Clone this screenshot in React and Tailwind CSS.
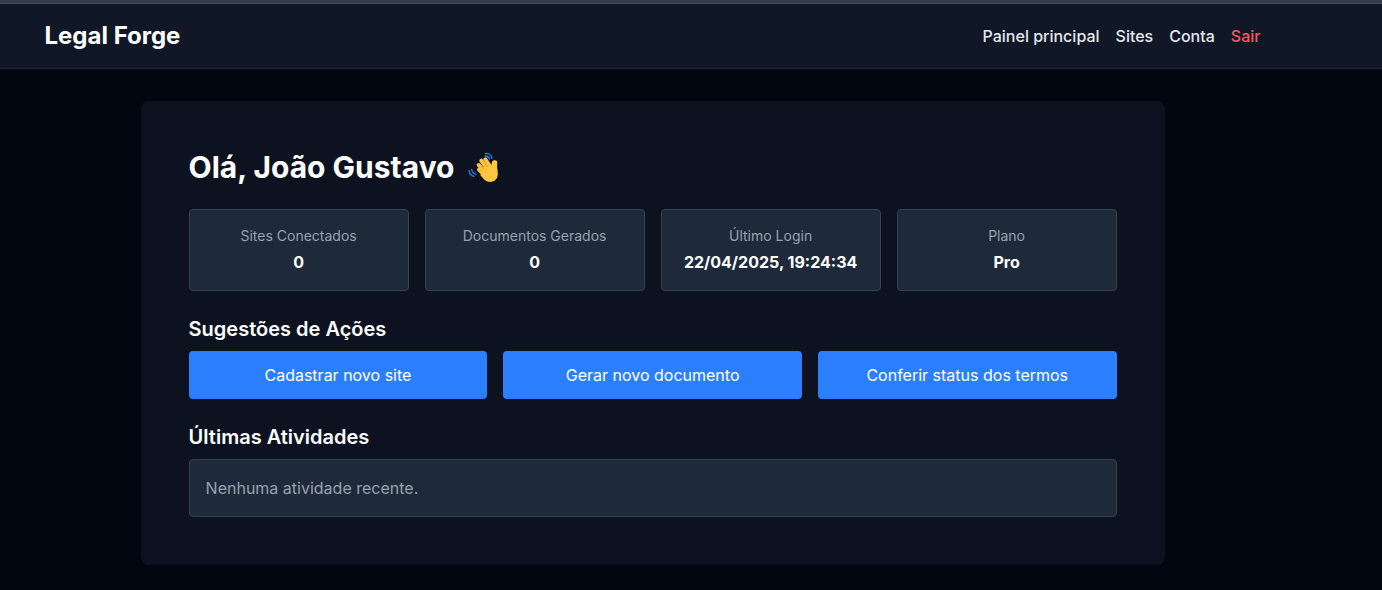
import React from 'react';

const stats = [
  { label: 'Sites Conectados', value: '0' },
  { label: 'Documentos Gerados', value: '0' },
  { label: 'Último Login', value: '22/04/2025, 19:24:34' },
  { label: 'Plano', value: 'Pro' },
];

const actions = ['Cadastrar novo site', 'Gerar novo documento', 'Conferir status dos termos'];

const WavingHand = () => (
  <svg viewBox="36 36 93 93" className="w-[31px] h-[31px] shrink-0" fill="none" strokeLinecap="round" strokeLinejoin="round">
    {/* Motion lines */}
    <g stroke="#2f7be0" strokeWidth="4">
      <path d="M88 41c10-2 18 4 20 14" />
      <path d="M87 48c6 0 11 3 14 9" />
      <path d="M39 91c1 9 6 16 15 18" />
      <path d="M47 88c1 7 6 12 13 15" />
    </g>
    {/* Fingers */}
    <g stroke="#ffc541" strokeWidth="12">
      <path d="M88 58l17 26" />
      <path d="M76 62l21 30" />
      <path d="M68 75l21 24" />
      <path d="M69 89l18 18" />
    </g>
    {/* Palm and thumb */}
    <path
      fill="#ffc541"
      d="M105 80c2-7 1-11 4-16 2-4 11-5 14 0 2 6-1 13 1 22 2 12 3 24-4 32-8 10-24 10-34 2L73 106l10-24z"
    />
    {/* Finger creases */}
    <g stroke="#f0a035" strokeWidth="2.2">
      <path d="M83 65l11 16" />
      <path d="M73 73l11 14" />
      <path d="M71 84l9 10" />
    </g>
  </svg>
);

const Header = () => (
  <header className="bg-[#101828] border-b border-[#1e2939]">
    <div className="h-16 flex items-center justify-between pl-[44.5px] pr-[121.5px]">
      <span className="text-2xl font-bold text-white">Legal Forge</span>
      <nav className="flex gap-4 font-medium text-gray-200">
        <a href="#">Painel principal</a>
        <a href="#">Sites</a>
        <a href="#">Conta</a>
        <a href="#" className="text-[#ff555c]">Sair</a>
      </nav>
    </div>
  </header>
);

const App = () => {
  return (
    <div className="h-[590px] overflow-hidden bg-[#020610] text-white font-['Inter',sans-serif]">
      {/* Top strip */}
      <div className="h-1 bg-[#323d4e] border-b border-[#474d57]"></div>
      <Header />

      <main className="ml-[140.6px] mt-8 w-5xl rounded-lg bg-[#0d1220] p-12">
        <h1 className="flex items-center gap-[13.5px] text-3xl font-bold mb-6">
          Olá, João Gustavo
          <WavingHand />
        </h1>

        <div className="grid grid-cols-4 gap-4 mb-6">
          {stats.map((stat) => (
            <div key={stat.label} className="rounded border border-[#364153] bg-[#1e2939] p-4 text-center">
              <p className="text-sm text-[#99a1af] mb-1">{stat.label}</p>
              <p className="font-bold">{stat.value}</p>
            </div>
          ))}
        </div>

        <h2 className="text-xl font-semibold mb-2">Sugestões de Ações</h2>
        <div className="grid grid-cols-3 gap-4 mb-6">
          {actions.map((action) => (
            <button key={action} className="rounded bg-[#2b7fff] py-3">{action}</button>
          ))}
        </div>

        <h2 className="text-xl font-semibold mb-2">Últimas Atividades</h2>
        <div className="rounded border border-[#364153] bg-[#1e2939] p-4">
          <p className="text-[#99a1af]">Nenhuma atividade recente.</p>
        </div>
      </main>
    </div>
  );
};

export default App;
